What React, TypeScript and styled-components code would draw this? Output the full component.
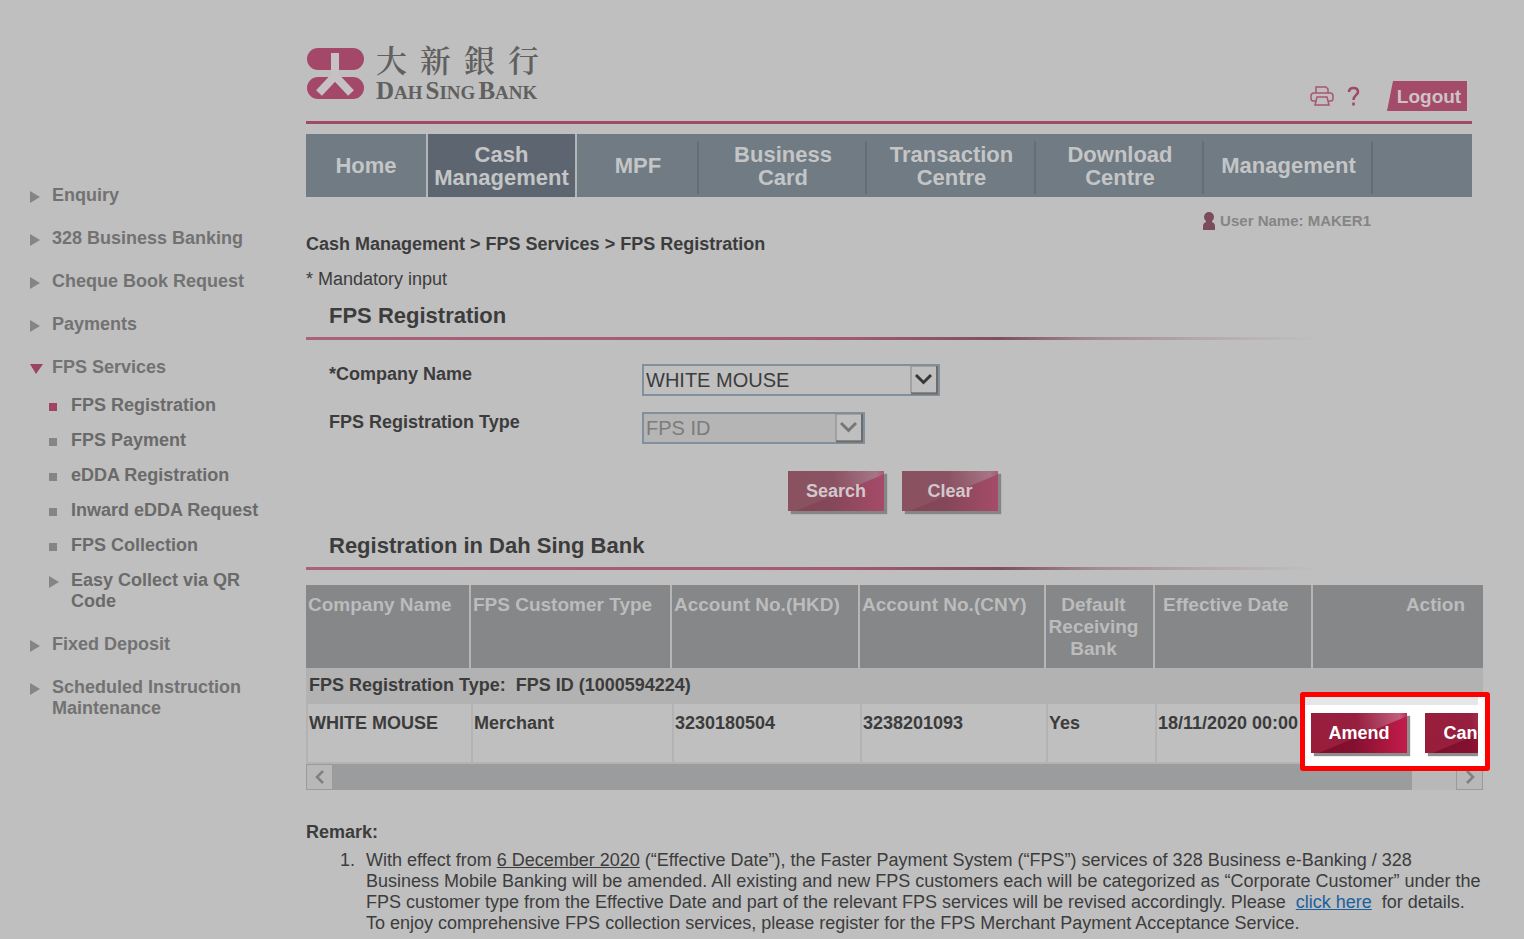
import React from "react";
import styled, { createGlobalStyle } from "styled-components";

const Global = createGlobalStyle`
  *, *::before, *::after { box-sizing: border-box; }
  html, body { margin: 0; background: #bfbfbf; }
  body { font-family: "Liberation Sans", Arial, sans-serif; font-size: 18px; line-height: 21px; color: #3c3c3c; }
  ul, ol, h1, h2, p { margin: 0; padding: 0; list-style: none; }
  button, select { font: inherit; }
`;

const Page = styled.div`
  display: grid;
  grid-template-columns: 306px minmax(0, 1fr);
  min-height: 100vh;
`;

const Sidebar = styled.nav`
  padding: 185px 20px 0 29px;
  font-weight: bold;
`;
const Menu = styled.ul`
  display: flex;
  flex-direction: column;
  gap: 22px;
`;
const SubMenu = styled.ul`
  display: flex;
  flex-direction: column;
  gap: 14px;
  padding: 17px 0 0 19px;
`;
const MenuLink = styled.a<{ $sub?: boolean }>`
  display: flex;
  gap: 11px;
  color: ${(p) => (p.$sub ? "#6a6a6a" : "#727272")};
  text-decoration: none;
`;
const Bullet = styled.svg`
  flex: none;
  width: 12px;
  height: 12px;
  margin-top: 6px;
`;

const Main = styled.main`
  padding: 44px 41px 0 0;
`;
const Top = styled.div`
  margin-right: 11px;
`;
const Header = styled.header`
  display: flex;
  justify-content: space-between;
  align-items: flex-end;
  height: 80px;
  padding-bottom: 10px;
  border-bottom: 3px solid #a04a66;
`;
const Brand = styled.div`
  display: flex;
  gap: 12px;
  padding-bottom: 1px;
  color: #606060;
`;
const ChineseName = styled.div`
  display: flex;
  gap: 13px;
  font: 600 31px/30px "Noto Serif CJK TC", "Noto Sans CJK TC", serif;
`;
const EnglishName = styled.div`
  display: flex;
  gap: 3px;
  font: bold 25px/34px "Liberation Serif", serif;
  small { font-size: 19px; }
`;
const Tools = styled.div`
  display: flex;
  align-items: center;
  padding-right: 5px;
`;
const IconButton = styled.button`
  display: flex;
  padding: 0;
  margin-right: 13px;
  border: 0;
  background: none;
`;
const HelpButton = styled(IconButton)`
  margin-right: 27px;
`;
const Logout = styled.button`
  height: 30px;
  width: 80px;
  padding: 0 0 0 4px;
  border: 0;
  background: #a34b68;
  clip-path: polygon(6px 0, 100% 0, 100% 100%, 0 100%);
  color: #cdc3c7;
  font-size: 19px;
  font-weight: bold;
`;

const NavBar = styled.nav`
  display: flex;
  height: 63px;
  margin-top: 10px;
  background: #707b84;
`;
const NavItem = styled.a<{ $w: number; $active?: boolean; $plain?: boolean }>`
  flex: none;
  display: flex;
  align-items: center;
  justify-content: center;
  position: relative;
  width: ${(p) => p.$w}px;
  color: #c4c5c6;
  background: ${(p) => (p.$active ? "#5d6670" : "none")};
  border: solid #b3b5b7;
  border-width: ${(p) => (p.$active ? "0 2px" : "0")};
  font-size: 22px;
  font-weight: bold;
  line-height: 23px;
  text-align: center;
  text-decoration: none;
  white-space: pre-line;
  &::after {
    content: "";
    display: ${(p) => (p.$active || p.$plain ? "none" : "block")};
    position: absolute;
    right: 0;
    top: 7px;
    bottom: 3px;
    width: 2px;
    background: #646e77;
  }
`;
const User = styled.div`
  display: flex;
  align-items: center;
  justify-content: flex-end;
  gap: 4px;
  height: 21px;
  margin-top: 13px;
  padding-right: 101px;
  color: #858585;
  font-size: 15px;
  font-weight: bold;
`;
const Crumbs = styled.p`
  margin-top: 3px;
  font-weight: bold;
`;
const Note = styled.p`
  margin-top: 14px;
`;
const Heading = styled.h2`
  padding: 13px 0 8px 23px;
  font-size: 22px;
  line-height: 26px;
`;
const Rule = styled.div`
  height: 3px;
  background: linear-gradient(90deg, #a9627a 0, #a35a72 45%, #7f4f60 59%, #a18b93 67%, #b3a9ac 76%, #bfbfbf 86%);
`;

const Form = styled.form`
  padding: 24px 0 9px 23px;
`;
const Field = styled.div<{ $gap: number }>`
  display: grid;
  grid-template-columns: 313px auto;
  justify-content: start;
  margin-bottom: ${(p) => p.$gap}px;
  label { font-weight: bold; }
`;
const SelectBox = styled.span<{ $w: number; $muted?: boolean }>`
  position: relative;
  display: block;
  width: ${(p) => p.$w}px;
  height: 32px;
  select {
    appearance: none;
    width: 100%;
    height: 100%;
    padding: 0 32px 0 2px;
    border: 2px solid #82909d;
    border-radius: 0;
    background: ${(p) => (p.$muted ? "#b5b5b5" : "#bfbfbf")};
    color: ${(p) => (p.$muted ? "#7c7c7c" : "#3c3c3c")};
    font-size: 20px;
    opacity: 1;
  }
  svg {
    position: absolute;
    right: 1px;
    top: 1px;
    width: 29px;
    height: 30px;
    pointer-events: none;
  }
`;
const Actions = styled.div`
  display: flex;
  gap: 18px;
  padding: 3px 0 0 459px;
`;
const RedButton = styled.button<{ $bright?: boolean }>`
  flex: none;
  position: relative;
  isolation: isolate;
  width: 96px;
  height: 40px;
  padding: 0;
  border: 0;
  color: ${(p) => (p.$bright ? "#fff" : "#d2c8cb")};
  background: linear-gradient(90deg, ${(p) => (p.$bright ? "#7d0d2c, #84102f 45%, #c41c4a" : "#824658, #85475a 45%, #a64b69")});
  box-shadow: 3px 3px 1px ${(p) => (p.$bright ? "#8d8d8d" : "#858585")};
  font-size: 18px;
  font-weight: bold;
  &::before {
    content: "";
    position: absolute;
    inset: 0;
    z-index: -1;
    clip-path: polygon(0 0, 100% 0, 100% 8%, 8% 100%, 0 100%);
    background: linear-gradient(80deg, ${(p) => (p.$bright ? "#981d3b, #97203f 50%, #c25d7c 92%, #bd2c54" : "#8a5161, #8b5263 50%, #a67585 92%, #a35b72")});
  }
`;

const Table = styled.table`
  width: 100%;
  table-layout: fixed;
  border-collapse: separate;
  border-spacing: 0;
  font-weight: bold;
  text-align: left;
  margin-top: 15px;
`;
const headPadding: Record<string, string> = {
  left: "9px 0 0 2px",
  inset: "9px 0 0 8px",
  center: "9px 14px 0 2px",
  right: "9px 18px 0 0",
};
const HeadCell = styled.th<{ $align: string; $w?: number }>`
  width: ${(p) => (p.$w ? p.$w + "px" : "auto")};
  height: 83px;
  padding: ${(p) => headPadding[p.$align]};
  vertical-align: top;
  text-align: ${(p) => (p.$align === "inset" ? "left" : p.$align)};
  white-space: ${(p) => (p.$align === "center" ? "normal" : "nowrap")};
  background: #868788;
  border-right: 2px solid #b6b6b6;
  color: #bcbcbc;
  font-size: 19px;
  line-height: 22px;
  &:last-child { border-right: 0; }
`;
const GroupCell = styled.td`
  height: 36px;
  padding: 0 3px 2px;
  background: #b2b2b2;
  white-space: pre;
`;
const Cell = styled.td`
  position: relative;
  height: 60px;
  padding: 9px 0 0 1px;
  vertical-align: top;
  border-left: 2px solid #b3b3b3;
  border-bottom: 2px solid #b3b3b3;
  white-space: nowrap;
`;
const Spotlight = styled.div`
  position: absolute;
  left: -15px;
  top: -12px;
  right: -7px;
  height: 79px;
  padding-right: 7px;
  border: 5px solid #fe0000;
  border-radius: 3px;
  background: #fff;
  z-index: 1;
`;
const SpotlightRow = styled.div`
  display: flex;
  gap: 18px;
  height: 100%;
  padding: 16px 0 0 6px;
  overflow: hidden;
  background: linear-gradient(#e6e6e8 8px, #fff 8px);
`;
const ScrollBar = styled.div`
  display: flex;
  justify-content: space-between;
  height: 26px;
  background: #b8b8b8;
`;
const ScrollButton = styled.button`
  display: flex;
  align-items: center;
  justify-content: center;
  width: 27px;
  padding: 0;
  border: 1px solid #999a9c;
  background: #b8b8b8;
`;
const Thumb = styled.div`
  flex: 1;
  margin-right: 44px;
  background: #9b9c9e;
`;

const Remark = styled.section`
  padding-top: 32px;
  h2 { font-size: 18px; line-height: 21px; }
`;
const RemarkList = styled.ol`
  padding: 7px 0 0 34px;
`;
const RemarkItem = styled.li`
  display: flex;
  gap: 11px;
  white-space: nowrap;
  a { color: #1c5f9f; }
`;

const shapes = {
  right: <path d="M1 0V12L11 6Z" fill="#858585" />,
  down: <path d="M1 1H14L7 11Z" fill="#9a4561" />,
  square: <path d="M1 2H9V10H1Z" fill="#858585" />,
  active: <path d="M1 2H9V10H1Z" fill="#a04464" />,
};
type Shape = keyof typeof shapes;

const Entry = ({ shape, text, sub }: { shape: Shape; text: string; sub?: boolean }) => (
  <MenuLink href="#" $sub={sub}>
    <Bullet viewBox="0 0 12 12" overflow="visible" aria-hidden="true">{shapes[shape]}</Bullet>
    <span>{text}</span>
  </MenuLink>
);

const subItems: [Shape, string][] = [
  ["active", "FPS Registration"],
  ["square", "FPS Payment"],
  ["square", "eDDA Registration"],
  ["square", "Inward eDDA Request"],
  ["square", "FPS Collection"],
  ["right", "Easy Collect via QR Code"],
];

const Arrow = ({ muted }: { muted?: boolean }) => (
  <svg viewBox="0 0 29 30" aria-hidden="true">
    <path d="M1 1H27V28H1Z" fill="#bfbfbf" stroke="#858585" />
    <path d="M27 1V28.500H1" fill="none" stroke="#6c6c6c" strokeWidth="2" />
    <path d="M6 10L13.500 17.500L21 10" fill="none" stroke={muted ? "#777" : "#383838"} strokeWidth="3" />
  </svg>
);

const columns: { text: string; w?: number; align?: string }[] = [
  { text: "Company Name", w: 165 },
  { text: "FPS Customer Type", w: 201 },
  { text: "Account No.(HKD)", w: 188 },
  { text: "Account No.(CNY)", w: 186 },
  { text: "Default Receiving Bank", w: 109, align: "center" },
  { text: "Effective Date", w: 158, align: "inset" },
  { text: "Action", align: "right" },
];

const Caps = ({ word }: { word: string }) => (
  <span>{word[0]}<small>{word.slice(1)}</small></span>
);

export default function App() {
  return (
    <>
      <Global />
      <Page>
        <Sidebar>
          <Menu>
            <li><Entry shape="right" text="Enquiry" /></li>
            <li><Entry shape="right" text="328 Business Banking" /></li>
            <li><Entry shape="right" text="Cheque Book Request" /></li>
            <li><Entry shape="right" text="Payments" /></li>
            <li>
              <Entry shape="down" text="FPS Services" />
              <SubMenu>
                {subItems.map(([shape, text]) => (
                  <li key={text}><Entry sub shape={shape} text={text} /></li>
                ))}
              </SubMenu>
            </li>
            <li><Entry shape="right" text="Fixed Deposit" /></li>
            <li><Entry shape="right" text="Scheduled Instruction Maintenance" /></li>
          </Menu>
        </Sidebar>
        <Main>
          <Top>
            <Header>
              <Brand>
                <svg width="58" height="60" viewBox="0 0 58 60" aria-hidden="true">
                  <rect x="1" y="4" width="57" height="22" rx="11" fill="#a34869" />
                  <rect x="1" y="33" width="57" height="22" rx="11" fill="#a34869" />
                  <path d="M29 9V35M29 32L13 49M29 32L45 49" stroke="#c6c1c3" strokeWidth="8" fill="none" />
                </svg>
                <div>
                  <ChineseName lang="zh-Hant">
                    {["大", "新", "銀", "行"].map((c) => <span key={c}>{c}</span>)}
                  </ChineseName>
                  <EnglishName><Caps word="DAH" /><Caps word="SING" /><Caps word="BANK" /></EnglishName>
                </div>
              </Brand>
              <Tools>
                <IconButton aria-label="Print">
                  <svg width="24" height="20" viewBox="0 0 24 20" fill="none" stroke="#a9566f" strokeWidth="1.500">
                    <path d="M6 7V1H16L18 3V7M6 15H3Q1 15 1 12V10Q1 7 4 7H20Q23 7 23 10V12Q23 15 21 15H18M7 11H17L19 19H5Z" />
                  </svg>
                </IconButton>
                <HelpButton aria-label="Help">
                  <svg width="13" height="20" viewBox="0 0 13 20" fill="none" stroke="#a04a66" strokeWidth="2.600">
                    <path d="M2 6Q2 2 6.500 2T11 6C11 9 6.500 9 6.500 14M6.500 16.500V19.500" />
                  </svg>
                </HelpButton>
                <Logout>Logout</Logout>
              </Tools>
            </Header>
            <NavBar>
              <NavItem href="#" $w={120} $plain>Home</NavItem>
              <NavItem href="#" $w={151} $active>{"Cash\nManagement"}</NavItem>
              <NavItem href="#" $w={122}>MPF</NavItem>
              <NavItem href="#" $w={168}>{"Business\nCard"}</NavItem>
              <NavItem href="#" $w={169}>{"Transaction\nCentre"}</NavItem>
              <NavItem href="#" $w={168}>{"Download\nCentre"}</NavItem>
              <NavItem href="#" $w={169}>Management</NavItem>
            </NavBar>
            <User>
              <svg width="14" height="18" viewBox="0 0 14 18" fill="#7d4c5b" aria-hidden="true">
                <circle cx="7" cy="5" r="5" /><path d="M4 8H10V10Q13 11 13 14V18H1V14Q1 11 4 10Z" />
              </svg>
              User Name: MAKER1
            </User>
          </Top>
          <Crumbs>Cash Management &gt; FPS Services &gt; FPS Registration</Crumbs>
          <Note>* Mandatory input</Note>
          <Heading>FPS Registration</Heading>
          <Rule />
          <Form onSubmit={(e) => e.preventDefault()}>
            <Field $gap={16}>
              <label htmlFor="company">*Company Name</label>
              <SelectBox $w={298}>
                <select id="company"><option>WHITE MOUSE</option></select>
                <Arrow />
              </SelectBox>
            </Field>
            <Field $gap={24}>
              <label htmlFor="type">FPS Registration Type</label>
              <SelectBox $w={223} $muted>
                <select id="type" disabled><option>FPS ID</option></select>
                <Arrow muted />
              </SelectBox>
            </Field>
            <Actions>
              <RedButton type="submit">Search</RedButton>
              <RedButton type="reset">Clear</RedButton>
            </Actions>
          </Form>
          <Heading>Registration in Dah Sing Bank</Heading>
          <Rule />
          <Table>
            <thead>
              <tr>
                {columns.map((c) => (
                  <HeadCell key={c.text} scope="col" $w={c.w} $align={c.align || "left"}>{c.text}</HeadCell>
                ))}
              </tr>
            </thead>
            <tbody>
              <tr><GroupCell colSpan={7}>{"FPS Registration Type:  FPS ID (1000594224)"}</GroupCell></tr>
              <tr>
                <Cell>WHITE MOUSE</Cell>
                <Cell>Merchant</Cell>
                <Cell>3230180504</Cell>
                <Cell>3238201093</Cell>
                <Cell>Yes</Cell>
                <Cell>18/11/2020 00:00</Cell>
                <Cell>
                  <Spotlight>
                    <SpotlightRow>
                      <RedButton $bright>Amend</RedButton>
                      <RedButton $bright>Cancel</RedButton>
                    </SpotlightRow>
                  </Spotlight>
                </Cell>
              </tr>
            </tbody>
          </Table>
          <ScrollBar>
            <ScrollButton aria-label="Scroll left">
              <svg width="12" height="14" viewBox="0 0 12 14" fill="none" stroke="#808080" strokeWidth="2.500"><path d="M9 1L3 7L9 13" /></svg>
            </ScrollButton>
            <Thumb />
            <ScrollButton aria-label="Scroll right">
              <svg width="12" height="14" viewBox="0 0 12 14" fill="none" stroke="#808080" strokeWidth="2.500"><path d="M3 1L9 7L3 13" /></svg>
            </ScrollButton>
          </ScrollBar>
          <Remark>
            <h2>Remark:</h2>
            <RemarkList>
              <RemarkItem>
                <span>1.</span>
                <p>
                  With effect from <u>6 December 2020</u> (“Effective Date”), the Faster Payment System (“FPS”) services of 328 Business e-Banking / 328<br />
                  Business Mobile Banking will be amended. All existing and new FPS customers each will be categorized as “Corporate Customer” under the<br />
                  FPS customer type from the Effective Date and part of the relevant FPS services will be revised accordingly. Please &nbsp;<a href="#">click here</a>&nbsp; for details.<br />
                  To enjoy comprehensive FPS collection services, please register for the FPS Merchant Payment Acceptance Service.
                </p>
              </RemarkItem>
            </RemarkList>
          </Remark>
        </Main>
      </Page>
    </>
  );
}
